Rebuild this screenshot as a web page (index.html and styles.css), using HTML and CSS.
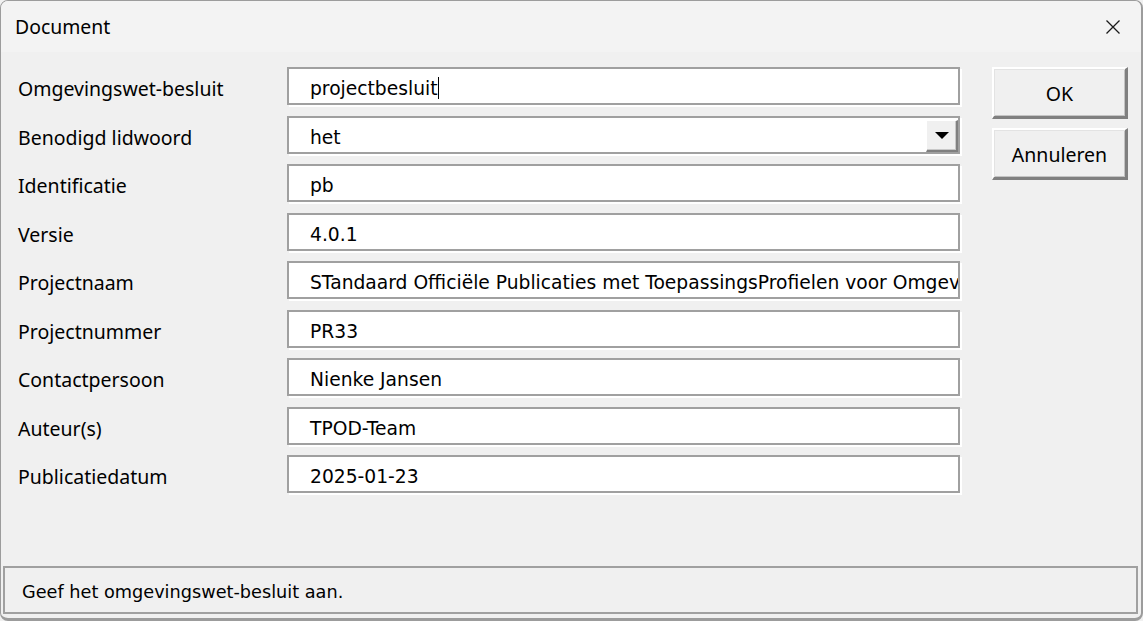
FILE: index.html
```html
<!DOCTYPE html>
<html lang="nl">
<head>
<meta charset="utf-8">
<title>Document</title>
<link rel="stylesheet" href="styles.css">
</head>
<body>
<div class="window">
  <div class="titlebar">
    <span class="title">Document</span>
    <span class="close">
      <svg width="16" height="16" viewBox="0 0 16 16"><path d="M1.5 1.5 L14.5 14.5 M14.5 1.5 L1.5 14.5" stroke="#1a1a1a" stroke-width="1.3" fill="none"/></svg>
    </span>
  </div>
  <div class="content">
    <div class="form">
      <label class="lbl">Omgevingswet-besluit</label>
      <div class="field"><span class="val">projectbesluit</span><span class="caret"></span></div>
      <label class="lbl">Benodigd lidwoord</label>
      <div class="field combo"><span class="val">het</span><span class="dropbtn"><span class="tri"></span></span></div>
      <label class="lbl">Identificatie</label>
      <div class="field"><span class="val">pb</span></div>
      <label class="lbl">Versie</label>
      <div class="field"><span class="val">4.0.1</span></div>
      <label class="lbl">Projectnaam</label>
      <div class="field"><span class="val">STandaard Officiële Publicaties met ToepassingsProfielen voor Omgevingsdocumenten</span></div>
      <label class="lbl">Projectnummer</label>
      <div class="field"><span class="val">PR33</span></div>
      <label class="lbl">Contactpersoon</label>
      <div class="field"><span class="val">Nienke Jansen</span></div>
      <label class="lbl">Auteur(s)</label>
      <div class="field"><span class="val">TPOD-Team</span></div>
      <label class="lbl">Publicatiedatum</label>
      <div class="field"><span class="val">2025-01-23</span></div>
    </div>
    <div class="buttons">
      <button class="btn btn-ok">OK</button>
      <button class="btn btn-cancel">Annuleren</button>
    </div>
  </div>
  <div class="status">Geef het omgevingswet-besluit aan.</div>
</div>
</body>
</html>
```

FILE: styles.css
```css
* { box-sizing: border-box; }
html, body { margin: 0; padding: 0; background: #f0f0f0; }
body { width: 1143px; height: 621px; overflow: hidden; }

.window {
  width: 1143px;
  height: 621px;
  border: 1px solid #9c9c9c;
  border-bottom-width: 3px;
  border-right-width: 2px;
  border-radius: 8px;
  background: #f0f0f0;
  display: flex;
  flex-direction: column;
  overflow: hidden;
}

.titlebar {
  height: 51px;
  background: #f3f3f3;
  display: flex;
  align-items: center;
  justify-content: space-between;
  padding: 0 20px 0 14px;
  font-family: "Noto Sans", "Open Sans", sans-serif;
  font-size: 19.4px;
  color: #000;
}
.title { position: relative; top: 0; }
.close { display: flex; align-items: center; }

.content {
  flex: 1;
  display: flex;
  padding: 15px 14px 0 17px;
}

.form {
  display: grid;
  grid-template-columns: 269px 673px;
  row-gap: 10.5px;
  align-content: start;
}

.lbl {
  font-family: "Noto Sans", "Open Sans", sans-serif;
  font-size: 19.5px;
  color: #000;
  display: flex;
  align-items: center;
  padding-top: 5px;
  height: 38px;
  white-space: nowrap;
}

.field {
  height: 38px;
  background: #fff;
  border: 2px solid #a0a0a0;
  box-shadow: 2px 2px 0 0 #ffffff;
  display: flex;
  align-items: center;
  padding-left: 21px;
  padding-top: 5px;
  overflow: hidden;
  white-space: nowrap;
  font-family: "DejaVu Sans", Verdana, sans-serif;
  font-size: 18.7px;
  color: #000;
}
.val { white-space: nowrap; }
.caret {
  display: inline-block;
  width: 1px;
  height: 22px;
  background: #000;
  margin-left: 0;
  position: relative;
  top: -1px;
}

.combo { position: relative; }
.dropbtn {
  position: absolute;
  right: 0;
  top: 2px;
  width: 32px;
  height: 32px;
  background: #f0f0f0;
  border-style: solid;
  border-width: 1px 2px 2px 1px;
  border-color: #ffffff #808080 #808080 #ffffff;
  box-shadow: inset -1px -1px 0 #c8c8c8;
  display: flex;
  align-items: center;
  justify-content: center;
}
.tri {
  width: 0;
  height: 0;
  border-left: 7px solid transparent;
  border-right: 7px solid transparent;
  border-top: 7px solid #000;
}

.buttons {
  display: flex;
  flex-direction: column;
  gap: 9px;
  margin-left: 32px;
}
.btn {
  width: 136px;
  height: 52px;
  background: #f0f0f0;
  border-style: solid;
  border-width: 2px 3px 3px 2px;
  border-color: #ffffff #808080 #808080 #ffffff;
  box-shadow: inset 1px 1px 0 #e3e3e3, inset -1px -1px 0 #c4c4c4;
  font-family: "Noto Sans", "Open Sans", sans-serif;
  font-size: 19.5px;
  color: #000;
  padding: 2px 0 0 0;
}

.status {
  margin: 0 3px 4px 2px;
  height: 48px;
  border: 2px solid #a0a0a0;
  background: #f0f0f0;
  display: flex;
  align-items: center;
  padding-left: 17px;
  padding-top: 4px;
  font-family: "DejaVu Sans", Verdana, sans-serif;
  font-size: 17.7px;
  color: #000;
}
```
